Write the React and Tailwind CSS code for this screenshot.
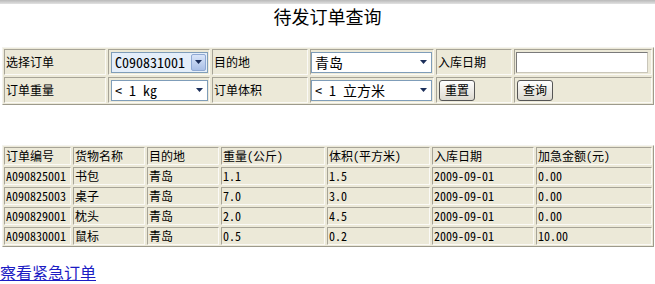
import React from 'react';

const FONT = "font-['Noto_Sans_Mono_CJK_SC','Noto_Sans_CJK_SC',sans-serif]";
const cellBorder = 'border border-t-[#a7a497] border-l-[#a7a497] border-b-[#fbfaf6] border-r-[#fbfaf6]';

const Arrow = () => (
  <svg width="7" height="4" viewBox="0 0 7 4" className="block">
    <path d="M0 0h7L3.5 4z" fill="#1c2f5a" />
  </svg>
);

const Select = ({ value, width, focused }) => (
  <div
    className={`h-[21px] flex items-center border border-[#7f9db9] ${focused ? 'bg-[#e4eefa]' : 'bg-white'} ${width}`}
  >
    <span className="flex-1 pl-[3px] text-[14px] leading-none whitespace-pre">{value}</span>
    {focused ? (
      <div className="w-[15px] h-[17px] mr-[1px] flex items-center justify-center rounded-[2px] border border-[#8fa9d4] bg-gradient-to-b from-[#d9e5f9] to-[#a9bfe6]">
        <Arrow />
      </div>
    ) : (
      <div className="w-[16px] h-[17px] flex items-center justify-center">
        <Arrow />
      </div>
    )}
  </div>
);

const Button = ({ children }) => (
  <button className="h-[21px] px-[5px] rounded-[3px] border border-[#555] bg-gradient-to-b from-[#ffffff] to-[#dcd9cf] text-[12px] leading-none text-black">
    {children}
  </button>
);

const Label = ({ children }) => (
  <div className={`${cellBorder} flex items-center pl-[1px] text-[12px]`}>{children}</div>
);

const Box = ({ children, pad = 'pl-[2px]' }) => (
  <div className={`${cellBorder} flex items-center ${pad}`}>{children}</div>
);

const orders = [
  ['A090825001', '书包', '青岛', '1.1', '1.5', '2009-09-01', '0.00'],
  ['A090825003', '桌子', '青岛', '7.0', '3.0', '2009-09-01', '0.00'],
  ['A090829001', '枕头', '青岛', '2.0', '4.5', '2009-09-01', '0.00'],
  ['A090830001', '鼠标', '青岛', '0.5', '0.2', '2009-09-01', '10.00'],
];

const headers = ['订单编号', '货物名称', '目的地', '重量(公斤)', '体积(平方米)', '入库日期', '加急金额(元)'];

export default function App() {
  return (
    <div className={`w-[655px] h-[284px] bg-white overflow-hidden text-black ${FONT}`}>
      <div className="h-[4px] bg-gradient-to-b from-[#b9b9b9] to-[#e2e2e2]" />
      <h1 className="mt-[2px] text-center text-[18px] leading-[20px] font-normal">待发订单查询</h1>

      <div className="mt-[21px] ml-[2px] w-[652px] p-px bg-[#ece9d8] border border-t-[#f4f3ee] border-l-[#f4f3ee] border-b-[#9d9a8c] border-r-[#9d9a8c]">
        <div className="grid grid-cols-[102px_102px_96px_124px_76px_138px] grid-rows-[26px_26px] gap-[2px]">
          <Label>选择订单</Label>
          <Box>
            <Select value="C090831001" width="w-[97px]" focused />
          </Box>
          <Label>目的地</Label>
          <Box pad="pl-0">
            <Select value="青岛" width="w-[121px]" />
          </Box>
          <Label>入库日期</Label>
          <Box pad="pl-[1px]">
            <div className="w-[132px] h-[21px] bg-white border border-t-[#7a7a7a] border-l-[#7a7a7a] border-b-[#c9c6ba] border-r-[#c9c6ba]" />
          </Box>

          <Label>订单重量</Label>
          <Box>
            <Select value="< 1 kg" width="w-[97px]" />
          </Box>
          <Label>订单体积</Label>
          <Box pad="pl-0">
            <Select value="< 1 立方米" width="w-[121px]" />
          </Box>
          <Box>
            <Button>重置</Button>
          </Box>
          <Box>
            <Button>查询</Button>
          </Box>
        </div>
      </div>

      <div className="mt-[40px] ml-[2px] w-[652px] p-px bg-[#ece9d8] border border-t-[#f4f3ee] border-l-[#f4f3ee] border-b-[#9d9a8c] border-r-[#9d9a8c]">
        <div className="grid grid-cols-[67px_72px_72px_104px_103px_102px_1fr] auto-rows-[18px] gap-[2px] text-[12px]">
          {headers.map((h) => (
            <div key={h} className={`${cellBorder} flex items-center pl-[1px] leading-none whitespace-nowrap`}>
              {h}
            </div>
          ))}
          {orders.map((row) =>
            row.map((v, i) => (
              <div key={row[0] + i} className={`${cellBorder} flex items-center pl-[1px] leading-none whitespace-nowrap`}>
                {v}
              </div>
            ))
          )}
        </div>
      </div>

      <a href="#" className="block mt-[15px] w-fit text-[16px] leading-[20px] text-[#1c1cc4] underline">
        察看紧急订单
      </a>
    </div>
  );
}
